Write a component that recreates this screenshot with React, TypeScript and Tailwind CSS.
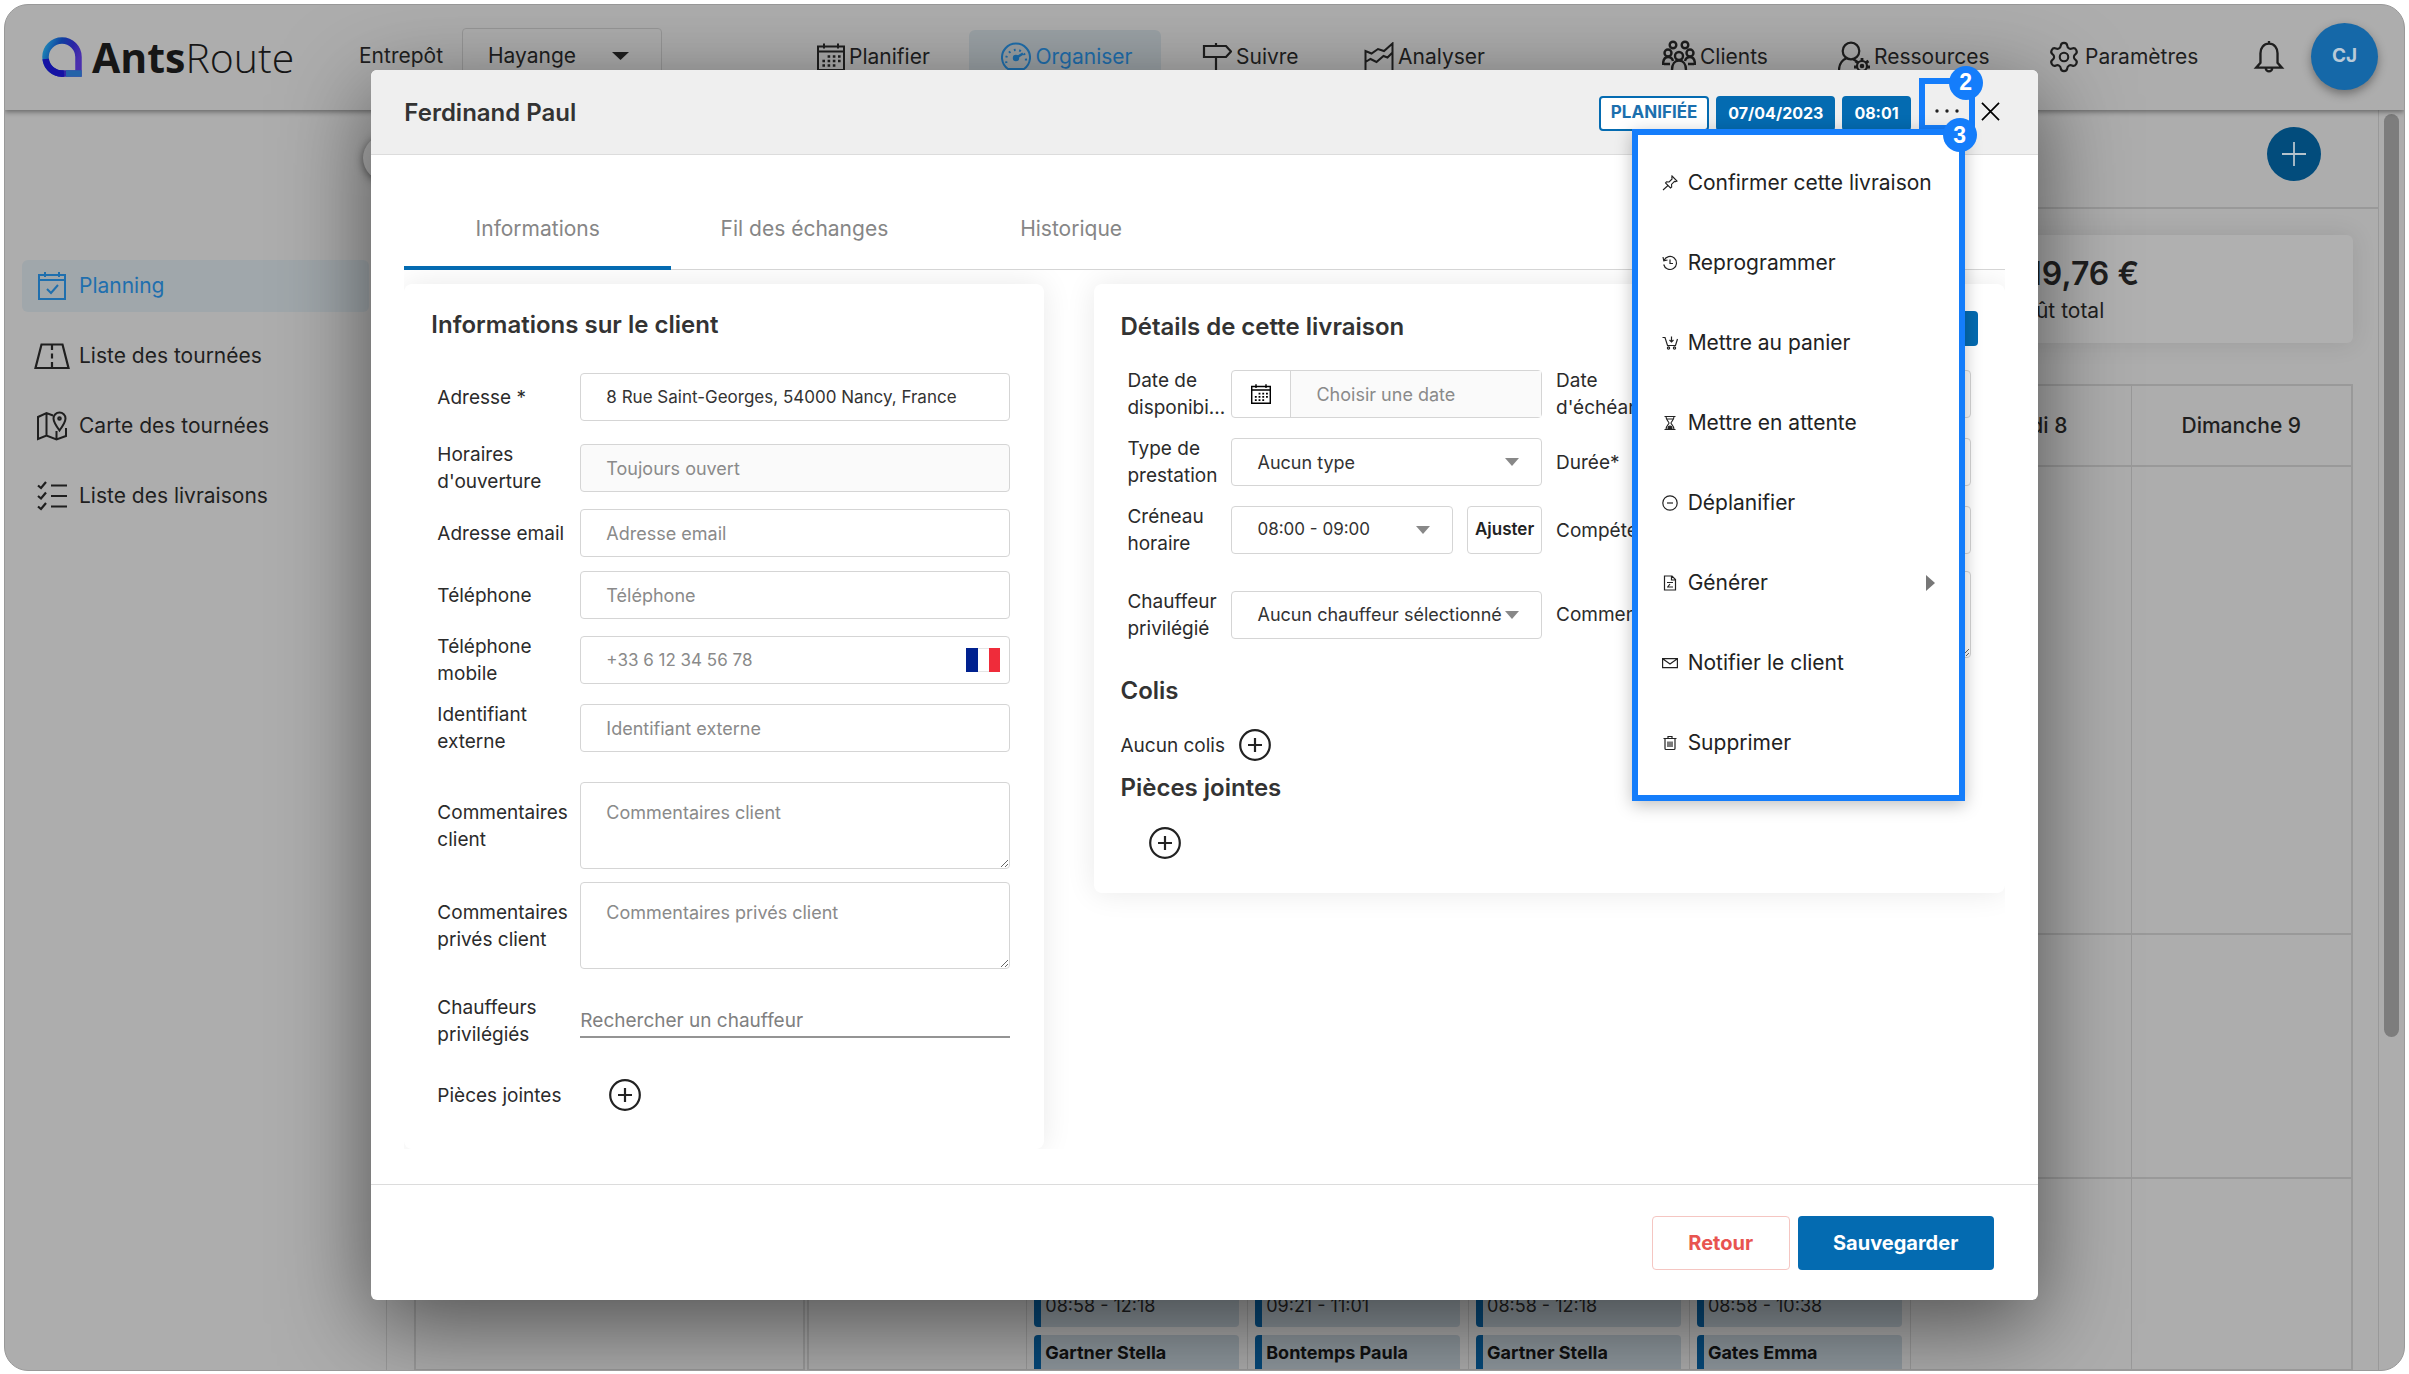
import React from "react";
import { Settings } from "lucide-react";

type IconProps = { className?: string };

const Svg = ({ className, box = 24, sw = 1.5, children }: IconProps & { box?: number; sw?: number; children: React.ReactNode }) => (
  <svg className={className} viewBox={`0 0 ${box} ${box}`} fill="none" stroke="currentColor" strokeWidth={sw} aria-hidden="true">
    {children}
  </svg>
);

const Logo = () => (
  <svg className="size-10" viewBox="0 0 40 40" fill="none" aria-hidden="true">
    <defs>
      <linearGradient id="ring" x1="0" y1="0.2" x2="1" y2="0.6">
        <stop offset="0" stopColor="#1c7fb5" />
        <stop offset="0.35" stopColor="#0f3fa0" />
        <stop offset="0.7" stopColor="#2a25a5" />
        <stop offset="1" stopColor="#4a2fae" />
      </linearGradient>
    </defs>
    <path d="M36.5 36.5H20A16.5 16.5 0 1 1 36.5 20Z" stroke="url(#ring)" strokeWidth="6.5" />
    <path d="M3.700 22A16.5 16.5 0 0 0 22 36.5" stroke="#1512a4" strokeWidth="6.5" />
    <path d="M24 36.5H39.7" stroke="#2463a8" strokeWidth="6.5" />
  </svg>
);

const CalendarGrid = ({ className }: IconProps) => (
  <Svg className={className} box={28} sw={2}>
    <path d="M1 3.5h26V27H1zM1 8.500h26M7 .5v5M21 .5v5" />
    <path d="M10.600 13.500H24M5.400 18H24M5.400 22.500H19" strokeWidth="2.600" strokeDasharray="2.600 2.600" />
  </Svg>
);
const Gauge = ({ className }: IconProps) => (
  <Svg className={className} box={30} sw={2}>
    <path d="M7 27A14 14 0 1 1 23 27Z" />
    <path d="M15 16l7-4.500" strokeWidth="2.600" />
    <circle cx="15" cy="16" r="2.200" fill="currentColor" />
    <path d="M5.500 21A10 10 0 1 1 24.500 21" strokeWidth="2.200" strokeDasharray="1.800 3.700" />
  </Svg>
);
const Signpost = ({ className }: IconProps) => (
  <Svg className={className} box={30} sw={2.2}>
    <path d="M2 4h22l5 5.500-5 5.500H2zM14 1v3M14 15v14" />
  </Svg>
);
const FlagChart = ({ className }: IconProps) => (
  <Svg className={className} box={30} sw={2}>
    <path d="M1.500 29V9l6 2.500L14 7l6 2 8.500-7.500V29M1.500 20l5-3 6 3 7-6 4 1.500 5-5" />
  </Svg>
);
const People = ({ className }: IconProps) => (
  <Svg className={className} box={34} sw={2.4}>
    <circle cx="11" cy="5" r="3.300" />
    <circle cx="23" cy="5" r="3.300" />
    <circle cx="6" cy="13" r="3.500" />
    <circle cx="28" cy="13" r="3.500" />
    <circle cx="17" cy="16" r="4" />
    <path d="M1 25c0-5 2-8 5-8s4.500 2 5 4M33 25c0-5-2-8-5-8s-4.500 2-5 4M10 30c0-6 3-9.500 7-9.500s7 3.500 7 9.500M2 24h6M26 24h6" />
  </Svg>
);
const PersonGear = ({ className }: IconProps) => (
  <Svg className={className} box={32} sw={2.2}>
    <circle cx="13" cy="10" r="8.300" />
    <path d="M1 29c0-6 3-10 8-12M15 18l3 2" />
    <circle cx="24" cy="25" r="5" />
    <circle cx="24" cy="25" r="1.200" />
    <path d="M24 17v3M17.500 20l3 2M30.500 20l-3 2M16 26h3M29 26h3" strokeWidth="2.800" />
  </Svg>
);
const Bell = ({ className }: IconProps) => (
  <Svg className={className} box={30} sw={2.2}>
    <path d="M15 2.500c-5 0-8 4-8 9v9l-4 4.500h24l-4-4.500v-9c0-5-3-9-8-9zM12 25.500a3 3 0 0 0 6 0M15 0v3" />
  </Svg>
);
const CalendarCheck = ({ className }: IconProps) => (
  <Svg className={className} box={28} sw={2}>
    <path d="M1 3h26v24H1zM1 8h26M7 0v5M21 0v5" />
    <path d="M9 17l4 4 7-8" />
  </Svg>
);
const Road = ({ className }: IconProps) => (
  <Svg className={className} box={36} sw={2.2}>
    <path d="M7.500 6.500h21L34.500 30H1.500zM18 7v5M18 15.500v5M18 24v5" />
  </Svg>
);
const MapPin = ({ className }: IconProps) => (
  <Svg className={className} box={30} sw={2}>
    <path d="M16 4.500L9.500 2 1 6v22l8.500-3.500 10 4 9.500-3.500V17M9.500 2v22.500M19.500 20v8.500" />
    <path d="M22.500 19.500C18.500 14 16.500 11 16.500 7.500a6 6 0 0 1 12 0c0 3.500-2 6.500-6 12z" />
    <circle cx="22.500" cy="7.500" r="1.300" />
  </Svg>
);
const CheckList = ({ className }: IconProps) => (
  <Svg className={className} box={30} sw={2.2}>
    <path d="M14 4.500h16M14 15h16M14 25.500h16M1 4.500L4 7l5-6M1 15l3 2.500 5-6M1 25.500L4 28l5-6" />
  </Svg>
);

const Pin = ({ className }: IconProps) => (
  <Svg className={className} box={16} sw={1.1}>
    <path d="M10 1l5 5-1.500.6-1-.2-3 3 .2 2.600-1.200 1L3.500 8l1-1.200 2.600.2 3-3-.3-1.500zM6 10.500L1 15" />
  </Svg>
);
const History = ({ className }: IconProps) => (
  <Svg className={className} box={16} sw={1.2}>
    <path d="M2 5.500A6.500 6.500 0 1 1 1.700 9.500M1 2l.8 3.800L5.500 5M8 4.500V8.500h3" />
  </Svg>
);
const Cart = ({ className }: IconProps) => (
  <Svg className={className} box={16} sw={1.2}>
    <path d="M.5 2.500H3l2.500 8h8l2-6.500M9.500 1.500v5M7.500 5l2 2 2-2" />
    <circle cx="6.500" cy="13" r="1.100" />
    <circle cx="12.500" cy="13" r="1.100" />
  </Svg>
);
const Hourglass = ({ className }: IconProps) => (
  <Svg className={className} box={16} sw={1.1}>
    <path d="M2.500 1.500h11M2.500 14.500h11M4 1.500c0 4 3 5 3 6.500s-3 2.500-3 6.500M12 1.500c0 4-3 5-3 6.500s3 2.500 3 6.500M5 4h6" />
    <path d="M6 13.500c0-1.500 1-2.500 2-2.500s2 1 2 2.500z" fill="currentColor" />
  </Svg>
);
const MinusRound = ({ className }: IconProps) => (
  <Svg className={className} box={16} sw={1.2}>
    <circle cx="8" cy="8" r="7.200" />
    <path d="M5 8h6" />
  </Svg>
);
const FileDoc = ({ className }: IconProps) => (
  <Svg className={className} box={16} sw={1.2}>
    <path d="M2.500 1h7.500l3.500 3.500V15h-11zM9.500 1v4h4M5 7.500h6M5 12h6M8 9l-2 2.500" />
  </Svg>
);
const Mail = ({ className }: IconProps) => (
  <Svg className={className} box={16} sw={1.2}>
    <path d="M.6 3.600h14.800v9H.6zM1 4l7 5 7-5" />
  </Svg>
);
const Trash = ({ className }: IconProps) => (
  <Svg className={className} box={16} sw={1.2}>
    <path d="M3 4v9.500q0 1 1 1h8q1 0 1-1V4M1.500 3.500h13M6 3V1.500h4V3M6 6.500v5.500M8 6.500v5.500M10 6.500v5.500" />
  </Svg>
);

const PlusCircle = ({ label }: { label: string }) => (
  <button type="button" aria-label={label} className="size-8 shrink-0 text-[#222]">
    <Svg className="size-8" box={32} sw={2.2}>
      <circle cx="16" cy="16" r="14.800" />
      <path d="M16 9v14M9 16h14" />
    </Svg>
  </button>
);

const Caret = ({ className = "" }: IconProps) => (
  <svg className={`pointer-events-none absolute top-1/2 h-2 -translate-y-1/2 ${className}`} viewBox="0 0 14 8" preserveAspectRatio="none" fill="currentColor" aria-hidden="true">
    <path d="M0 0h14L7 8z" />
  </svg>
);

const fieldBase = "h-12 w-full rounded-sm border border-[#d5d5d5] px-[25px] text-[#333] placeholder:text-[#8a8a8a]";
const field = `${fieldBase} bg-white text-[18px]`;
const fieldDigits = `${fieldBase} bg-white text-[17px]`;
const fieldMuted = `${fieldBase} bg-[#fafafa] text-[18px]`;
const area = "block h-[87px] w-full rounded-sm border border-[#d5d5d5] bg-white px-[25px] pt-4 text-[18px] placeholder:text-[#8a8a8a]";
const labelText = "text-[19px] leading-[27px] text-[#2b2b2b]";

function Row({ label, id, gap, children }: { label: string; id: string; gap: string; children: React.ReactNode }) {
  return (
    <div className={`flex items-center ${gap}`}>
      <label htmlFor={id} className={`w-[143px] shrink-0 ${labelText}`}>{label}</label>
      <div className="relative min-w-0 flex-1">{children}</div>
    </div>
  );
}

function Picker({ id, value, digits }: { id: string; value: string; digits?: boolean }) {
  return (
    <div className="relative min-w-0 flex-1">
      <select id={id} className={`appearance-none ${digits ? fieldDigits : field}`} defaultValue={value}>
        <option>{value}</option>
      </select>
      <Caret className="right-[23px] w-3.5 text-[#888]" />
    </div>
  );
}

const menu = [
  { text: "Confirmer cette livraison", Icon: Pin },
  { text: "Reprogrammer", Icon: History },
  { text: "Mettre au panier", Icon: Cart },
  { text: "Mettre en attente", Icon: Hourglass },
  { text: "Déplanifier", Icon: MinusRound },
  { text: "Générer", Icon: FileDoc, sub: true },
  { text: "Notifier le client", Icon: Mail },
  { text: "Supprimer", Icon: Trash },
];

const side = [
  { text: "Planning", Icon: CalendarCheck, size: "size-7", active: true },
  { text: "Liste des tournées", Icon: Road, size: "size-9" },
  { text: "Carte des tournées", Icon: MapPin, size: "size-[30px]" },
  { text: "Liste des livraisons", Icon: CheckList, size: "size-[30px]" },
];

const days = ["Lundi 3", "Mardi 4", "Mercredi 5", "Jeudi 6", "Vendredi 7", "Samedi 8", "Dimanche 9"];
const events: Record<number, [string, string]> = {
  1: ["08:58 - 12:18", "Gartner Stella"],
  2: ["09:21 - 11:01", "Bontemps Paula"],
  3: ["08:58 - 12:18", "Gartner Stella"],
  4: ["08:58 - 10:38", "Gates Emma"],
};

function NavItem({ text, Icon, size, className }: { text: string; Icon: (p: IconProps) => React.ReactNode; size: string; className: string }) {
  return (
    <a href="#" className={`flex shrink-0 items-center gap-1 ${className}`}>
      <Icon className={size} />
      <span>{text}</span>
    </a>
  );
}

function TopBar() {
  return (
    <header className="relative z-10 flex h-[105px] shrink-0 items-start bg-[#adadad] text-[21px] text-[#1f1f1f] shadow-[0_2px_5px_rgba(0,0,0,0.4)]">
      <div className="ml-[37px] mt-[31px] flex w-[317px] shrink-0 items-center">
        <Logo />
        <span className="ml-2.5 font-['Open_Sans'] text-[41px] leading-[42px] text-[#161616]">
          <b>Ants</b><span className="font-light">Route</span>
        </span>
      </div>
      <div className="mt-[23px] flex w-[458px] shrink-0 items-center gap-[15px]">
        <label htmlFor="depot" className="w-[88px]">Entrepôt</label>
        <div className="relative">
          <select id="depot" className="h-14 w-[200px] appearance-none rounded-sm border border-[#979797] bg-transparent px-[25px]">
            <option>Hayange</option>
          </select>
          <Caret className="right-[33px] w-[17px] text-[#1f1f1f]" />
        </div>
      </div>
      <nav className="mt-[25px] flex flex-1 *:h-[54px]">
        <NavItem text="Planifier" Icon={CalendarGrid} size="size-7" className="w-[152px]" />
        <NavItem text="Organiser" Icon={Gauge} size="size-[30px]" className="w-48 justify-center rounded-md bg-[#9ba2a6] pl-1 text-[#1f6fae]" />
        <NavItem text="Suivre" Icon={Signpost} size="size-[30px]" className="ml-[41px] w-[162px]" />
        <NavItem text="Analyser" Icon={FlagChart} size="size-[30px]" className="mr-auto" />
        <NavItem text="Clients" Icon={People} size="size-[34px]" className="w-[176px]" />
        <NavItem text="Ressources" Icon={PersonGear} size="size-8" className="w-[209px]" />
        <a href="#" className="flex w-[206px] items-center gap-1">
          <Settings className="size-[34px]" strokeWidth={1.5} />
          <span>Paramètres</span>
        </a>
        <button type="button" aria-label="Notifications" className="mr-[26px]"><Bell className="size-[32px]" /></button>
      </nav>
      <button type="button" className="mr-[26px] mt-[18px] size-[67px] rounded-full bg-[#1568a8] text-[19px] font-bold text-[#b9cad8] shadow-[0_4px_10px_rgba(0,0,0,0.35)]">CJ</button>
    </header>
  );
}

function Planner() {
  return (
    <div className="flex min-h-0 flex-1 text-[21px] text-[#1f1f1f]">
      <aside className="relative w-[382px] shrink-0 border-r border-[#999]">
        <button type="button" aria-label="Replier" className="absolute left-[358px] top-[25px] size-[46px] rounded-full bg-[#b4b4b4] shadow-[0_2px_8px_rgba(0,0,0,0.5)]" />
        <nav className="flex flex-col gap-[18px] px-[17px] pt-[150px]">
          {side.map(({ text, Icon, size, active }) => (
            <a key={text} href="#" className={`flex h-[52px] items-center rounded-md ${active ? "bg-[#a0a7ab] text-[#1f6fae]" : ""}`}>
              <span className="ml-3 mr-[9px] flex w-9 justify-center"><Icon className={size} /></span>
              {text}
            </a>
          ))}
        </nav>
      </aside>
      <main className="flex min-w-0 flex-1 flex-col border-r border-[#999]">
        <div className="flex h-[99px] shrink-0 items-start justify-end border-b-2 border-[#999] pr-[57px] pt-[17px]">
          <button type="button" aria-label="Ajouter" className="flex size-[54px] items-center justify-center rounded-full bg-[#024c7c] text-[#b5c3cc]">
            <Svg className="size-6" sw={1.8}><path d="M12 0v24M0 12h24" /></Svg>
          </button>
        </div>
        <section className="ml-[27px] mr-[25px] mt-[26px] flex h-[108px] shrink-0 justify-end rounded-md bg-[#b0b0b0] shadow-[0_0_24px_rgba(0,0,0,0.1)]">
          <div className="w-[345px] pt-5">
            <p className="text-[32px] font-semibold leading-[38px]">419,76 €</p>
            <p className="leading-9">Coût total</p>
          </div>
        </section>
        <table className="ml-[27px] mr-[25px] mt-[41px] w-[calc(100%-52px)] table-fixed border-collapse border-2 border-[#999]">
          <thead>
            <tr className="h-[81px] border-b-2 border-[#999]">
              <td className="w-[391px] border-r-[6px] border-double border-[#999]" />
              {days.map((d) => <th key={d} className="border-l border-[#999] font-medium">{d}</th>)}
            </tr>
          </thead>
          <tbody>
            {["h-[468px]", "h-[244px]", "h-[192px]"].map((h, r) => (
              <tr key={h} className={`border-b-2 border-[#999] ${h}`}>
                <td className="border-r-[6px] border-double border-[#999]" />
                {days.map((d, i) => (
                  <td key={d} className="border-l border-[#999] pl-[7px] pr-2 align-bottom">
                    {r === 2 && events[i] && (
                      <div className="text-[18px]">
                        <div className="mb-2 flex h-20 items-end rounded-sm border-l-[7px] border-[#06497a] bg-[#8f989e] pb-2 pl-1">{events[i][0]}</div>
                        <div className="h-[34px] rounded-t-sm border-l-[7px] border-[#06497a] bg-[#8f989e] pl-1 pt-1 font-bold text-[#111]">{events[i][1]}</div>
                      </div>
                    )}
                  </td>
                ))}
              </tr>
            ))}
          </tbody>
        </table>
      </main>
      <div className="w-[25px] shrink-0 px-[5px] pt-1">
        <div className="h-[923px] rounded-full bg-[#7d7d7d]" />
      </div>
    </div>
  );
}

function ClientCard() {
  return (
    <section className="w-[40%] shrink-0 rounded-lg bg-white pb-[38px] pl-[33px] pr-[34px] pt-[23px] shadow-[0_0_30px_rgba(0,0,0,0.09)]">
      <h2 className="-ml-1.5 text-[24px] font-semibold leading-[35px] text-[#333]">Informations sur le client</h2>
      <Row label="Adresse *" id="adresse" gap="mt-[31px]"><input id="adresse" className={fieldDigits} defaultValue="8 Rue Saint-Georges, 54000 Nancy, France" /></Row>
      <Row label="Horaires d'ouverture" id="horaires" gap="mt-5"><input id="horaires" readOnly placeholder="Toujours ouvert" className={fieldMuted} /></Row>
      <Row label="Adresse email" id="email" gap="mt-3.5"><input id="email" type="email" placeholder="Adresse email" className={field} /></Row>
      <Row label="Téléphone" id="tel" gap="mt-3.5"><input id="tel" placeholder="Téléphone" className={field} /></Row>
      <Row label="Téléphone mobile" id="mobile" gap="mt-3.5">
        <input id="mobile" placeholder="+33 6 12 34 56 78" className={fieldDigits} />
        <span className="absolute right-2.5 top-3 flex h-6 w-[34px]"><i className="flex-1 bg-[#00218f]" /><i className="flex-1 border-y border-[#e5e5e5] bg-white" /><i className="flex-1 bg-[#ef2c3a]" /></span>
      </Row>
      <Row label="Identifiant externe" id="ident" gap="mt-3.5"><input id="ident" placeholder="Identifiant externe" className={field} /></Row>
      <Row label="Commentaires client" id="com" gap="mt-[27px]"><textarea id="com" placeholder="Commentaires client" className={area} /></Row>
      <Row label="Commentaires privés client" id="priv" gap="mt-[13px]"><textarea id="priv" placeholder="Commentaires privés client" className={area} /></Row>
      <Row label="Chauffeurs privilégiés" id="chauf" gap="mt-[25px]"><input id="chauf" placeholder="Rechercher un chauffeur" className="h-[34px] w-full border-b-2 border-[#949494] text-[19px] placeholder:text-[#808080]" /></Row>
      <div className="mt-[31px] flex items-center">
        <span className={`w-[172px] ${labelText}`}>Pièces jointes</span>
        <PlusCircle label="Ajouter une pièce jointe au client" />
      </div>
    </section>
  );
}

function DeliveryCard() {
  const lab2 = `pl-3.5 ${labelText}`;
  const h2 = "text-[24px] font-semibold text-[#333]";
  return (
    <section className="min-w-0 flex-1 self-start rounded-lg bg-white pb-[34px] pl-[26px] pr-[27px] pt-[23px] shadow-[0_0_30px_rgba(0,0,0,0.09)]">
      <div className="flex items-center justify-between">
        <h2 className={`${h2} leading-[35px]`}>Détails de cette livraison</h2>
        <button type="button" aria-label="Modifier" className="mt-1 h-[35px] w-12 rounded-sm bg-[#046bb1]" />
      </div>
      <div className="ml-[7px] mr-[7px] mt-[21px] grid grid-cols-[104px_minmax(0,1fr)_118px_minmax(0,1fr)] items-center gap-y-3.5">
        <label htmlFor="dispo" className={labelText}>Date de disponibi...</label>
        <div className="flex h-12 rounded-sm border border-[#d5d5d5]">
          <button type="button" aria-label="Ouvrir le calendrier" className="flex w-[59px] shrink-0 items-center justify-center border-r border-[#d5d5d5]"><CalendarGrid className="size-5" /></button>
          <input id="dispo" placeholder="Choisir une date" className="min-w-0 flex-1 bg-[#fafafa] px-[25px] text-[18px] placeholder:text-[#8a8a8a]" />
        </div>
        <label htmlFor="ech" className={lab2}>Date d'échéance</label>
        <input id="ech" className={fieldMuted} />
        <label htmlFor="type" className={labelText}>Type de prestation</label>
        <Picker id="type" value="Aucun type" />
        <label htmlFor="duree" className={lab2}>Durée*</label>
        <input id="duree" className={field} />
        <label htmlFor="creneau" className={labelText}>Créneau horaire</label>
        <div className="flex gap-3.5">
          <Picker id="creneau" value="08:00 - 09:00" digits />
          <button type="button" className="h-12 w-[75px] rounded-sm border border-[#d5d5d5] text-[17px] font-semibold text-[#222]">Ajuster</button>
        </div>
        <label htmlFor="comp" className={lab2}>Compétences</label>
        <input id="comp" className={field} />
        <label htmlFor="chauffeur" className={labelText}>Chauffeur privilégié</label>
        <Picker id="chauffeur" value="Aucun chauffeur sélectionné" />
        <label htmlFor="comm" className={lab2}>Commentaires</label>
        <textarea id="comm" className={area} />
      </div>
      <h2 className={`${h2} mt-[18px] leading-[30px]`}>Colis</h2>
      <div className="mt-[23px] flex items-center gap-3.5">
        <span className={labelText}>Aucun colis</span>
        <PlusCircle label="Ajouter un colis" />
      </div>
      <h2 className={`${h2} mt-3 leading-[30px]`}>Pièces jointes</h2>
      <div className="ml-[29px] mt-6 h-8"><PlusCircle label="Ajouter une pièce jointe" /></div>
    </section>
  );
}

const badge = "flex h-[35px] items-center rounded-sm border-2 border-[#046bb1] font-bold";
const step = "absolute flex size-[34px] items-center justify-center rounded-full bg-[#147dfb] font-['Liberation_Sans'] text-[23px] font-bold text-white";

function Dialog() {
  return (
    <div role="dialog" aria-label="Ferdinand Paul" className="relative w-[69.4%] self-start rounded-md bg-white shadow-[0_24px_90px_rgba(0,0,0,0.55)]">
      <div className="flex h-[85px] items-center rounded-t-md border-b border-[#dcdcdc] bg-[#efefef] pl-[33px] pr-[38px] pt-0.5">
        <h1 className="mr-auto text-[24px] font-semibold text-[#333]">Ferdinand Paul</h1>
        <span className={`${badge} bg-white px-2.5 text-[17px] text-[#1b6fae]`}>PLANIFIÉE</span>
        <span className={`${badge} ml-[7px] bg-[#046bb1] px-2.5 text-[16px] text-white`}>07/04/2023</span>
        <span className={`${badge} ml-[7px] bg-[#046bb1] px-2.5 text-[16px] text-white`}>08:01</span>
        <div className="relative ml-2 h-[53px] w-14 -translate-y-[9px] border-[6px] border-[#147dfb]">
          <button type="button" aria-label="Plus d'actions" className="flex size-full items-center justify-center pt-3.5">
            <svg className="h-1 w-6" viewBox="0 0 24 4" fill="#222" aria-hidden="true"><circle cx="2" cy="2" r="1.700" /><circle cx="12" cy="2" r="1.700" /><circle cx="22" cy="2" r="1.700" /></svg>
          </button>
          <span className={`${step} -right-3.5 -top-[18px]`}>2</span>
        </div>
        <button type="button" aria-label="Fermer" className="mb-1 ml-1.5"><Svg className="size-[19px]" box={20} sw={1.8}><path d="M1 1l18 18M19 1L1 19" /></Svg></button>
      </div>

      <div className="px-[33px]">
        <div role="tablist" className="mt-[31px] flex border-b border-[#d5d5d5] text-[21px] text-[#868686]">
          {["Informations", "Fil des échanges", "Historique"].map((t, i) => (
            <button key={t} type="button" role="tab" aria-selected={i === 0} className={`-mb-px h-[84px] w-1/6 border-b-4 pt-1.5 ${i === 0 ? "border-[#046bb1]" : "border-transparent"}`}>{t}</button>
          ))}
        </div>
        <div className="flex gap-[50px] overflow-hidden pt-3.5">
          <ClientCard />
          <DeliveryCard />
        </div>
      </div>

      <div className="mt-[35px] flex justify-end gap-2 border-t border-[#dcdcdc] pb-[30px] pr-11 pt-[31px] text-[20px] font-bold">
        <button type="button" className="h-[54px] w-[138px] rounded-sm border border-[#f5c6c2] text-[#e85450]">Retour</button>
        <button type="button" className="h-[54px] w-[196px] rounded-sm bg-[#046bb1] text-white">Sauvegarder</button>
      </div>

      <div role="menu" className="absolute right-[73px] top-[59px] w-[333px] border-[6px] border-[#147dfb] bg-white pb-3 pt-2 text-[21px] text-[#222] shadow-[0_4px_16px_rgba(0,0,0,0.25)]">
        {menu.map(({ text, Icon, sub }) => (
          <button key={text} type="button" role="menuitem" className="flex h-20 w-full items-center gap-2.5 whitespace-nowrap pl-6 pr-6">
            <Icon className="size-4 shrink-0" />
            {text}
            {sub && <svg className="ml-auto h-4 w-[9px]" viewBox="0 0 9 16" fill="#777" aria-hidden="true"><path d="M0 0l9 8-9 8z" /></svg>}
          </button>
        ))}
        <span className={`${step} -right-[18px] -top-[17px]`}>3</span>
      </div>
    </div>
  );
}

export default function App() {
  return (
    <div className="relative h-screen bg-white px-1 pb-[3px] pt-1 font-['Inter',sans-serif]">
      <div className="flex h-full flex-col overflow-hidden rounded-[24px] border border-[#999] bg-[#adadad]">
        <TopBar />
        <Planner />
      </div>
      <div className="absolute inset-1 z-20 flex justify-center overflow-hidden rounded-[24px] pt-[66px]">
        <Dialog />
      </div>
    </div>
  );
}
